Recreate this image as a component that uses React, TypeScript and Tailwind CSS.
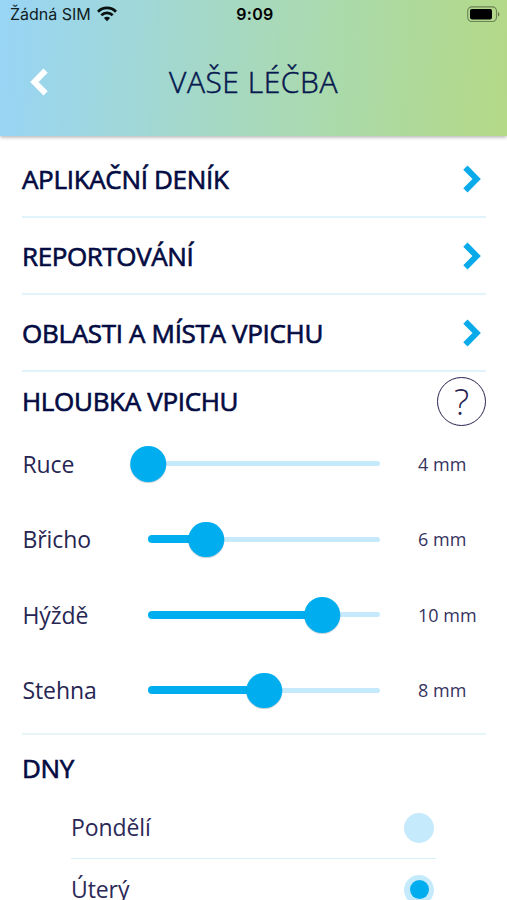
import clsx from "clsx";

const MENU = [
  { label: "APLIKAČNÍ DENÍK", tracking: "tracking-[-0.32px]" },
  { label: "REPORTOVÁNÍ", tracking: "tracking-[-0.4px]" },
  { label: "OBLASTI A MÍSTA VPICHU", tracking: "tracking-[-0.32px]" },
];

const MIN_DEPTH = 4;
const MAX_DEPTH = 12;

const DEPTHS = [
  { label: "Ruce", value: 4 },
  { label: "Břicho", value: 6 },
  { label: "Hýždě", value: 10 },
  { label: "Stehna", value: 8 },
];

const DAYS = [
  { label: "Pondělí", checked: false },
  { label: "Úterý", checked: true },
];

const HEADING =
  "text-[26px] leading-[36px] whitespace-nowrap text-[#030b42] [-webkit-text-stroke:0.65px_#030b42]";

function StatusBar() {
  return (
    <div className="grid h-7 grid-cols-3 items-center pr-[7px] pl-[10px] font-['Inter','Liberation_Sans',sans-serif] text-[16px] text-[#10201f]">
      <div className="flex items-center gap-[6px]">
        <span className="whitespace-nowrap">Žádná SIM</span>
        <svg width="20" height="16" viewBox="0 0 20 16" fill="none" stroke="#081010" strokeWidth="2.7">
          <path d="M1 5.7a12.7 12.7 0 0 1 18 0" />
          <path d="M4.3 9.2a8.1 8.1 0 0 1 11.4 0" />
          <path d="M10 15.3 6.9 12.1a4.4 4.4 0 0 1 6.2 0z" fill="#081010" stroke="none" />
        </svg>
      </div>
      <span className="text-center font-semibold tracking-[0.3px] text-black">9:09</span>
      <svg className="justify-self-end" width="33" height="17" viewBox="0 0 33 17">
        <rect x="0.7" y="0.9" width="28.8" height="14.6" rx="4.2" fill="none" stroke="#000" strokeOpacity="0.4" strokeWidth="1.1" />
        <rect x="3" y="3" width="22" height="10.4" rx="1.8" fill="#000" />
        <path d="M31 6v4.6q1.4-.7 1.4-2.3T31 6z" fill="#000" fillOpacity="0.45" />
      </svg>
    </div>
  );
}

function Chevron({ left = false, className }: { left?: boolean; className?: string }) {
  return (
    <svg
      className={clsx(left && "rotate-180", className)}
      width="18"
      height="28"
      viewBox="0 0 18 28"
      fill="none"
      stroke="currentColor"
      strokeWidth="6"
      strokeLinejoin="miter"
    >
      <path d="M2.4 2.7 13.6 14 2.4 25.3" />
    </svg>
  );
}

function DepthSlider({ label, value }: { label: string; value: number }) {
  const percent = ((value - MIN_DEPTH) / (MAX_DEPTH - MIN_DEPTH)) * 100;

  return (
    <div className="flex h-[75.5px] items-center">
      <span className="w-[125.5px] text-[23px] tracking-[-0.1px] text-[#272653]">{label}</span>
      <div className="relative flex h-9 w-[232px] items-center">
        <div className="h-[5px] w-full rounded-full bg-[#c5eafb]" />
        <div
          className="absolute left-0 h-2 rounded-full bg-[#00aeef]"
          style={{ width: `${percent}%` }}
        />
        <div
          className="absolute size-[35.5px] -translate-x-1/2 rounded-full bg-[#00aeef] shadow-[0_1px_1px_rgba(0,60,90,0.25)]"
          style={{ left: `${percent}%` }}
        />
      </div>
      <span className="ml-[38px] pt-px text-[18px] whitespace-nowrap text-[#35335f]">{value} mm</span>
    </div>
  );
}

function DayRow({ label, checked }: { label: string; checked: boolean }) {
  return (
    <div className="flex h-[62px] items-center justify-between border-b border-[#d5f0f7]">
      <span className="pt-px text-[23px] tracking-[-0.1px] text-[#2b2957]">{label}</span>
      <div className="mt-px mr-[2px] flex size-[30px] items-center justify-center rounded-full bg-[#c5eafb]">
        {checked && <div className="size-[19px] rounded-full bg-[#00aeef]" />}
      </div>
    </div>
  );
}

export default function App() {
  return (
    <div className="h-[900px] w-full overflow-hidden bg-white font-['Open_Sans','Noto_Sans',sans-serif]">
      <header className="relative h-[136px] bg-[linear-gradient(94deg,#98d4f6_0%,#9cd6e7_13%,#a0d7d9_26%,#a4d8c8_40%,#a8d9ba_52%,#abdaa8_69%,#b0d996_85%,#b4d987_100%)] shadow-[0_1px_4px_rgba(0,0,0,0.35)]">
        <StatusBar />
        <div className="grid h-[107px] grid-cols-[1fr_auto_1fr] items-center px-[30px]">
          <Chevron left className="text-white" />
          <h1 className="text-[30px] font-light tracking-[0.55px] whitespace-nowrap text-[#06174f] [-webkit-text-stroke:0.5px_#06174f]">
            VAŠE LÉČBA
          </h1>
        </div>
      </header>

      <main className="pt-[5px] pr-[21px] pl-[22px]">
        {MENU.map((item) => (
          <div
            key={item.label}
            className="flex h-[77px] items-center justify-between border-b-2 border-[#e2f4fb] pr-[5px]"
          >
            <h2 className={clsx(HEADING, item.tracking)}>{item.label}</h2>
            <Chevron className="text-[#08aaea]" />
          </div>
        ))}

        <section className="border-b-2 border-[#e6f6f8]">
          <div className="flex h-[54px] items-center justify-between pt-[5px]">
            <h2 className={clsx(HEADING, "pb-px tracking-[-0.32px]")}>HLOUBKA VPICHU</h2>
            <div className="flex size-[49px] items-center justify-center rounded-full border-[1.5px] border-[#292350] text-[36px] leading-none font-light text-[#292350]">
              ?
            </div>
          </div>
          <div className="pb-[5px] pl-[0.5px]">
            {DEPTHS.map((depth) => (
              <DepthSlider key={depth.label} {...depth} />
            ))}
          </div>
        </section>

        <section className="pt-[15px]">
          <h2 className={clsx(HEADING, "tracking-[-0.4px]")}>DNY</h2>
          <div className="mr-[50px] ml-[49px] pt-[10.5px]">
            {DAYS.map((day) => (
              <DayRow key={day.label} {...day} />
            ))}
          </div>
        </section>
      </main>
    </div>
  );
}
